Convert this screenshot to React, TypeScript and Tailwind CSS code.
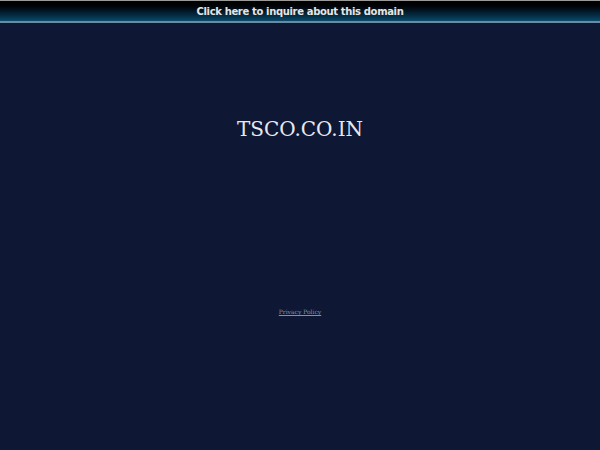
export default function App() {
  return (
    <div className="w-[600px] h-[450px] bg-[#0e1734] flex flex-col overflow-hidden">
      {/* Top bar */}
      <a
        href="#"
        className="h-[23px] shrink-0 border-t border-[#9a9a9a] border-b-2 border-b-[#6a8aa0] bg-gradient-to-b from-[#000000] to-[#0b4a6c] flex items-center justify-center text-[10px] tracking-[-0.35px] font-bold text-[#e6e6e6] font-['DejaVu_Sans',sans-serif]"
      >
        Click here to inquire about this domain
      </a>

      <div className="flex flex-col items-center">
        <h1 className="mt-[94px] text-[20px] leading-[24px] text-[#e8e8ee] font-['DejaVu_Serif',serif]">
          TSCO.CO.IN
        </h1>
        <a
          href="#"
          className="mt-[167px] text-[6px] leading-[8px] underline text-[#8a8fa4] font-['DejaVu_Serif',serif]"
        >
          Privacy Policy
        </a>
      </div>
    </div>
  )
}
